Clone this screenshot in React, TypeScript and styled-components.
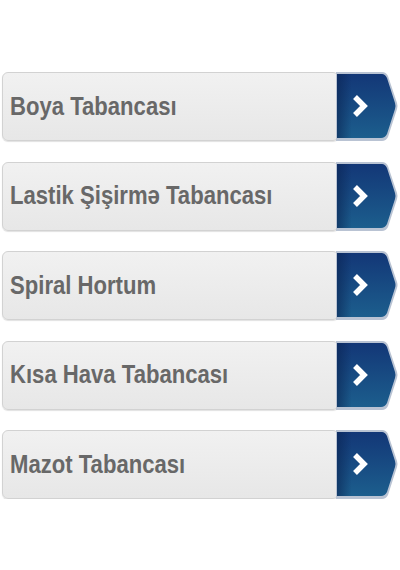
import React from 'react'
import styled, { createGlobalStyle } from 'styled-components'

const GlobalStyle = createGlobalStyle`
  html, body {
    margin: 0;
    padding: 0;
    background: #ffffff;
  }
  body {
    font-family: 'Liberation Sans', Arial, sans-serif;
  }
`

const items = [
  'Boya Tabancası',
  'Lastik Şişirmə Tabancası',
  'Spiral Hortum',
  'Kısa Hava Tabancası',
  'Mazot Tabancası',
]

const List = styled.div`
  display: flex;
  flex-direction: column;
  gap: 20.5px;
  padding: 72px 2px 0 2px;
`

const Row = styled.a`
  display: flex;
  align-items: stretch;
  height: 69px;
  text-decoration: none;
  cursor: pointer;
`

const LabelBox = styled.div`
  flex: 1;
  display: flex;
  align-items: center;
  box-sizing: border-box;
  padding-left: 7px;
  border: 1px solid #d2d2d2;
  border-radius: 6px;
  background: linear-gradient(#f1f1f1, #e7e7e7);
  box-shadow: 0 1px 1px rgba(0, 0, 0, 0.12);
  overflow: hidden;
  white-space: nowrap;
`

const Label = styled.span`
  display: inline-block;
  font-size: 26px;
  font-weight: bold;
  color: #686868;
  transform: scaleX(0.85);
  transform-origin: left center;
  margin-top: -1px;
`

const ArrowWrap = styled.div`
  width: 62px;
  margin-left: -3px;
  flex-shrink: 0;
  display: flex;
`

const Arrow: React.FC = () => (
  <ArrowWrap>
    <svg width="62" height="69" viewBox="0 0 62 69">
      <defs>
        <linearGradient id="blueFill" x1="0" y1="0" x2="0" y2="1">
          <stop offset="0" stopColor="#133777" />
          <stop offset="1" stopColor="#1c5e8d" />
        </linearGradient>
        <linearGradient id="edgeShade" x1="0" y1="0" x2="1" y2="0">
          <stop offset="0" stopColor="#0a2452" stopOpacity="0.6" />
          <stop offset="0.25" stopColor="#0a2452" stopOpacity="0" />
        </linearGradient>
      </defs>
      <path d="M0 0 H46 Q50 0 52 4 L61 31 Q62 34 61 37 L52 65 Q50 69 46 69 H0 Z" fill="#b9c3d3" />
      <path d="M1 2 H46 Q49 2 51 6 L59 31 Q60 34 59 37 L51 62 Q49 66 45 66 H1 Z" fill="url(#blueFill)" />
      <path d="M1 2 H46 Q49 2 51 6 L59 31 Q60 34 59 37 L51 62 Q49 66 45 66 H1 Z" fill="url(#edgeShade)" />
      <path d="M19 25 L28 34 L19 43" fill="none" stroke="#ffffff" strokeWidth="5.5" strokeLinejoin="miter" />
    </svg>
  </ArrowWrap>
)

const App: React.FC = () => {
  return (
    <>
      <GlobalStyle />
      <List>
        {items.map((item) => (
          <Row key={item}>
            <LabelBox>
              <Label>{item}</Label>
            </LabelBox>
            <Arrow />
          </Row>
        ))}
      </List>
    </>
  )
}

export default App
